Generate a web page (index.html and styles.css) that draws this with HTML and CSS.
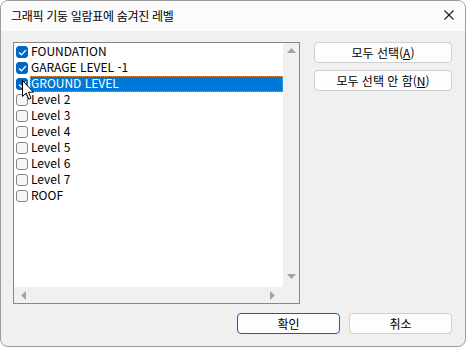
FILE: index.html
```html
<!DOCTYPE html>
<html lang="ko">
<head>
    <meta charset="UTF-8">
    <title>그래픽 기둥 일람표에 숨겨진 레벨</title>
    <link rel="stylesheet" href="styles.css">
</head>
<body>
    <div class="window">
        <!-- Title bar -->
        <div class="titlebar">
            <span class="title">그래픽 기둥 일람표에 숨겨진 레벨</span>
            <svg class="close" width="10" height="10" viewBox="0 0 10 10">
                <path d="M0.5 0.5 L9.5 9.5 M9.5 0.5 L0.5 9.5" stroke="#1a1a1a" stroke-width="1.1" fill="none"/>
            </svg>
        </div>

        <div class="content">
            <!-- Level list -->
            <div class="listbox">
                <div class="list-items">
                    <div class="item"><span class="check on"><svg width="9" height="7" viewBox="0 0 9 7"><path d="M1 3.5 L3.4 5.8 L8 1" stroke="#fff" stroke-width="1.2" fill="none"/></svg></span><span class="label">FOUNDATION</span></div>
                    <div class="item"><span class="check on"><svg width="9" height="7" viewBox="0 0 9 7"><path d="M1 3.5 L3.4 5.8 L8 1" stroke="#fff" stroke-width="1.2" fill="none"/></svg></span><span class="label">GARAGE LEVEL -1</span></div>
                    <div class="item selected"><span class="check on"><svg width="9" height="7" viewBox="0 0 9 7"><path d="M1 3.5 L3.4 5.8 L8 1" stroke="#fff" stroke-width="1.2" fill="none"/></svg></span><span class="label">GROUND LEVEL</span></div>
                    <div class="item"><span class="check"></span><span class="label">Level 2</span></div>
                    <div class="item"><span class="check"></span><span class="label">Level 3</span></div>
                    <div class="item"><span class="check"></span><span class="label">Level 4</span></div>
                    <div class="item"><span class="check"></span><span class="label">Level 5</span></div>
                    <div class="item"><span class="check"></span><span class="label">Level 6</span></div>
                    <div class="item"><span class="check"></span><span class="label">Level 7</span></div>
                    <div class="item"><span class="check"></span><span class="label">ROOF</span></div>
                </div>
                <div class="vscroll">
                    <svg width="9" height="5" viewBox="0 0 9 5"><path d="M4.5 0 L9 5 L0 5 Z" fill="#a3a3a3"/></svg>
                    <svg width="9" height="5" viewBox="0 0 9 5"><path d="M0 0 L9 0 L4.5 5 Z" fill="#a3a3a3"/></svg>
                </div>
                <div class="hscroll">
                    <svg width="5" height="9" viewBox="0 0 5 9"><path d="M0 4.5 L5 0 L5 9 Z" fill="#a3a3a3"/></svg>
                    <svg width="5" height="9" viewBox="0 0 5 9"><path d="M5 4.5 L0 0 L0 9 Z" fill="#a3a3a3"/></svg>
                </div>
                <div class="corner"></div>

                <!-- mouse pointer over the list -->
                <svg class="cursor" width="13" height="21" viewBox="0 0 13 21">
                    <path d="M0.5 0.5 L0.5 16.5 L4.2 13 L6.8 19.2 L9 18.2 L6.5 12.2 L11.5 12.2 Z" fill="#fff" stroke="#000" stroke-width="1" stroke-linejoin="round"/>
                </svg>
            </div>

            <!-- Side buttons -->
            <div class="side">
                <button class="btn">모두 선택(<u>A</u>)</button>
                <button class="btn">모두 선택 안 함(<u>N</u>)</button>
            </div>
        </div>

        <div class="footer">
            <button class="btn btn-wide default">확인</button>
            <button class="btn btn-wide">취소</button>
        </div>
    </div>
</body>
</html>
```
FILE: styles.css
```css
body {
    margin: 0;
    background: #ffffff;
    font-family: "Noto Sans CJK KR", "Noto Sans", sans-serif;
    font-size: 12px;
    color: #000;
}
.window {
    width: 466px;
    height: 347px;
    box-sizing: border-box;
    border: 1px solid #9c9c9c;
    border-radius: 8px;
    background: #f0f0f0;
    overflow: hidden;
    display: flex;
    flex-direction: column;
}
.titlebar {
    height: 30px;
    flex: none;
    display: flex;
    align-items: center;
    justify-content: space-between;
    padding: 0 11px 0 10px;
    background: #fbfbfb;
}
.title {
    font-size: 12px;
    letter-spacing: -0.3px;
    margin-top: -2px;
}
.close {
    margin-top: -2px;
}
.content {
    display: flex;
    padding: 11px 13px 0 12px;
}
.listbox {
    position: relative;
    width: 287px;
    height: 262px;
    box-sizing: border-box;
    border: 1px solid #828790;
    background: #fff;
    display: grid;
    grid-template-columns: 1fr 16px;
    grid-template-rows: 1fr 16px;
}
.list-items {
    padding: 1px 0 0 1px;
    overflow: hidden;
}
.item {
    display: flex;
    align-items: center;
    height: 16px;
}
.check {
    width: 12px;
    height: 12px;
    margin: 0 2px 0 1px;
    box-sizing: border-box;
    border: 1px solid #858585;
    border-radius: 3px;
    background: #f6f6f6;
    display: flex;
    align-items: center;
    justify-content: center;
}
.check.on {
    border-color: #0067c0;
    background: #0067c0;
}
.label {
    flex: 1;
    height: 16px;
    line-height: 14px;
    padding-left: 1px;
    white-space: nowrap;
}
.item.selected .label {
    background: #0078d7;
    color: #fff;
    outline: 1px dotted #f08a24;
    outline-offset: -1px;
}
.vscroll {
    background: #f0f0f0;
    display: flex;
    flex-direction: column;
    justify-content: space-between;
    align-items: center;
    padding: 5px 0 8px;
}
.hscroll {
    background: #f0f0f0;
    display: flex;
    justify-content: space-between;
    align-items: center;
    padding: 0 8px 0 7px;
}
.corner {
    background: #f0f0f0;
}
.cursor {
    position: absolute;
    left: 8px;
    top: 37px;
}
.side {
    margin-left: 14px;
    display: flex;
    flex-direction: column;
    gap: 7px;
}
.btn {
    width: 138px;
    height: 21px;
    padding: 0;
    box-sizing: border-box;
    border: 1px solid #d0d0d0;
    border-radius: 4px;
    background: #fdfdfd;
    font-family: inherit;
    font-size: 12px;
    color: #000;
    line-height: 17px;
}
.footer {
    display: flex;
    justify-content: flex-end;
    gap: 9px;
    padding: 9px 13px 0 0;
}
.btn-wide {
    width: 103px;
}
.btn.default {
    border-color: #0067c0;
}
```
